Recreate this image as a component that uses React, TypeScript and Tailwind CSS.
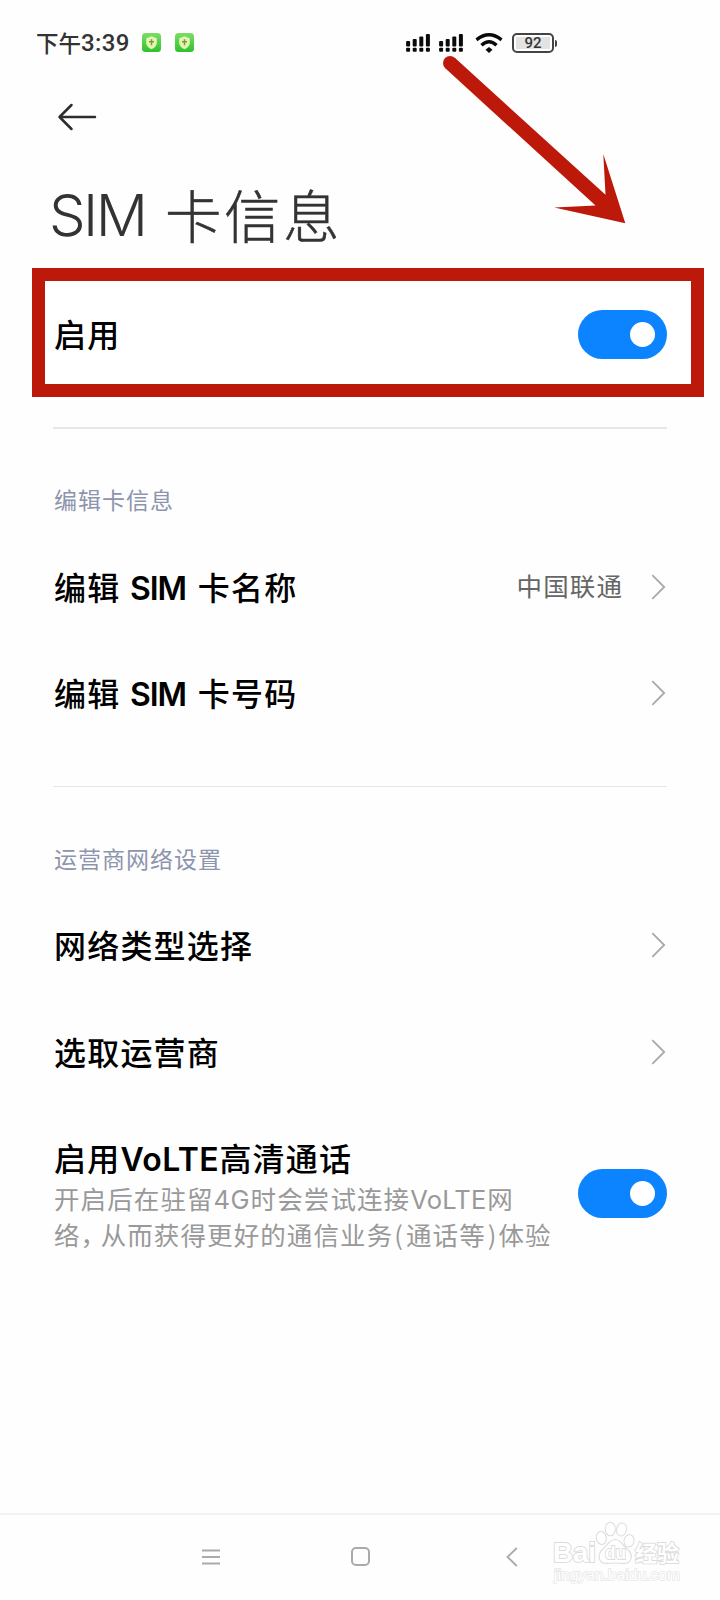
import type { ReactNode } from "react";

const CJK = "font-['Noto_Sans_CJK_SC',sans-serif]";

function ShieldBadge() {
  return (
    <svg className="h-[19px] w-[19px]" viewBox="0 0 19 19">
      <defs>
        <linearGradient id="badge" x1="0" y1="0" x2="0" y2="1">
          <stop offset="0" stopColor="#7ddc68" />
          <stop offset="1" stopColor="#2fc22c" />
        </linearGradient>
      </defs>
      <rect width="19" height="19" rx="3.5" fill="url(#badge)" />
      <path d="M9.5 3.2 L14.8 5.2 V9.4 C14.8 12.8 12.2 15 9.5 16.2 C6.8 15 4.2 12.8 4.2 9.4 V5.2 Z" fill="#e3f5b0" />
      <path d="M9.5 6.2 V12.2 M7 8.8 H12" stroke="#6fa03c" strokeWidth="1.5" />
    </svg>
  );
}

function Signal() {
  const tops = [8, 6, 3.5, 1];
  return (
    <svg className="h-5 w-6" viewBox="0 0 24 20">
      {tops.map((t, i) => (
        <g key={i} fill="#0a0a0a">
          <rect x={0.1 + i * 6.6} y={t} width="4" height={13.4 - t} rx="1" />
          <rect x={0.1 + i * 6.6} y="14.8" width="4" height="4" rx="1" />
        </g>
      ))}
    </svg>
  );
}

function Toggle() {
  return (
    <div className="flex h-[49px] w-[89px] shrink-0 items-center justify-end rounded-full bg-[#0d84ff] pr-3">
      <div className="h-[25px] w-[25px] rounded-full bg-white" />
    </div>
  );
}

function Chevron() {
  return (
    <svg className="mr-px h-[26px] w-[15px] shrink-0" viewBox="0 0 15 26" fill="none">
      <path d="M1.3 1.2 L13.2 13 L1.3 24.8" stroke="#a9a9a9" strokeWidth="1.8" />
    </svg>
  );
}

function Row({ children, value }: { children: ReactNode; value?: string }) {
  return (
    <div className="flex h-[106.5px] items-center">
      <div className="flex-1 pb-0.5 text-[32px] leading-[48px] font-medium tracking-[1.2px] whitespace-pre text-black">
        {children}
      </div>
      {value && <div className="mr-[28px] pb-[3px] text-[25.5px] leading-9 tracking-[1.1px] text-[#666]">{value}</div>}
      <Chevron />
    </div>
  );
}

function Sim() {
  return (
    <span className="inline-block w-[69px] pl-[9.5px] font-['Inter',sans-serif] leading-none font-semibold tracking-[-1px]">SIM</span>
  );
}

function SectionLabel({ children }: { children: string }) {
  return <div className="h-[34px] text-[23px] leading-[34px] tracking-[1px] text-[#8d94ad]">{children}</div>;
}

function Watermark() {
  return (
    <svg className="absolute top-[1518px] left-[545px] h-[72px] w-[145px]" viewBox="545 1518 145 72">
      <g fill="#fff" stroke="#dedede" strokeWidth="1.1">
        <ellipse cx="601.3" cy="1538" rx="5" ry="6.5" transform="rotate(-12 601.3 1538)" />
        <ellipse cx="610.3" cy="1529" rx="5" ry="6.8" />
        <ellipse cx="621.5" cy="1529.5" rx="5" ry="6.5" transform="rotate(14 621.5 1529.5)" />
        <ellipse cx="629" cy="1540.8" rx="5" ry="6.2" transform="rotate(10 629 1540.8)" />
        <path d="M615 1539.5 C620 1539.5 622 1544 626 1548 C631 1552 632.5 1556 630.5 1560 C628 1565 622 1563 615 1563 C608 1563 602 1565 599.8 1560 C598 1555 600 1551 604 1548 C608 1544 610 1539.5 615 1539.5 Z" />
      </g>
      <g fill="#fff" stroke="#dcdcdc" strokeWidth="1.8" paintOrder="stroke" fontWeight="700">
        <text x="553" y="1561.5" fontSize="27" fontFamily="Liberation Sans" textLength="43" lengthAdjust="spacingAndGlyphs">Bai</text>
        <text x="605" y="1559" fontSize="19" fontFamily="Liberation Sans" textLength="21" lengthAdjust="spacingAndGlyphs">du</text>
        <text x="635" y="1560.5" fontSize="22" fontFamily="Noto Sans CJK SC" textLength="44" lengthAdjust="spacingAndGlyphs">经验</text>
      </g>
      <text x="554" y="1580" fontSize="14" fontFamily="Liberation Sans" fill="#fff" stroke="#e6e6e6" strokeWidth="1.3" paintOrder="stroke" textLength="126" lengthAdjust="spacingAndGlyphs">jingyan.baidu.com</text>
    </svg>
  );
}

export default function App() {
  return (
    <div className={`relative flex h-[1600px] w-[720px] flex-col overflow-hidden bg-[#fefefe] ${CJK}`}>
      <header className="flex h-[86px] items-center pl-[36px]">
        <div className="flex w-[106px] items-center text-[#333]">
          <span className="pb-[3px] text-[22.5px] leading-8 font-medium">下午</span>
          <span className="font-['Roboto',sans-serif] text-[24px] leading-8 font-medium tracking-[0.4px]">3:39</span>
        </div>
        <div className="flex gap-[14px] pb-px">
          <ShieldBadge />
          <ShieldBadge />
        </div>
        <div className="ml-[212px] flex items-center">
          <Signal />
          <div className="w-[9px]" />
          <Signal />
          <svg className="ml-3 h-[21px] w-7" viewBox="0 0 28 21" fill="none" stroke="#0a0a0a">
            <path d="M1.5 6.8 Q14 -3.2 26.5 6.8" strokeWidth="3.4" />
            <path d="M6.5 12.2 Q14 5.2 21.5 12.2" strokeWidth="3.4" />
            <path d="M14 14 L17.5 16.8 L14 20 L10.5 16.8 Z" fill="#0a0a0a" stroke="none" />
          </svg>
          <div className="ml-[9px] flex h-5 w-[42px] items-center justify-center rounded-[5px] border-2 border-[#444] p-0.5">
            <span className="flex h-full w-full items-center justify-center bg-[#e3e3e3] font-['Roboto',sans-serif] text-[15px] font-medium text-[#333]">92</span>
          </div>
          <div className="ml-px h-[7px] w-0.5 rounded-r-sm bg-[#444]" />
        </div>
      </header>

      <div className="flex h-[62px] items-center pl-[57px]">
        <svg className="h-7 w-10" viewBox="0 0 40 28" fill="none" stroke="#2d2d2d" strokeWidth="2.5" strokeLinecap="round" strokeLinejoin="round">
          <path d="M38 14 H2.5 M14.5 2 L2.5 14 L14.5 26" />
        </svg>
      </div>

      <h1 className="flex h-[120px] items-center pt-2.5 pl-[49px] font-light text-[#333]">
        <span className="w-[116px] pt-[3px] font-['Inter',sans-serif] text-[58px] leading-[80px] tracking-[-2.6px]">SIM</span>
        <span className="text-[56.5px] leading-[80px] tracking-[2.5px] [-webkit-text-stroke:0.5px_#333]">卡信息</span>
      </h1>

      <div className="mr-4 ml-8 flex h-[129px] shrink-0 items-center border-[13px] border-[#bd190b] bg-white pr-[24px] pl-[9px]">
        <div className="flex-1 text-[32px] leading-[48px] font-medium tracking-[1.2px] text-black">启用</div>
        <div className="pt-[3px]">
          <Toggle />
        </div>
      </div>

      <main className="flex flex-col pr-[53px] pl-[54px]">
        <div className="mt-[30px] -ml-px h-[1.5px] bg-[#e6e6e6]" />
        <div className="h-[53px]" />
        <SectionLabel>编辑卡信息</SectionLabel>
        <div className="h-[18px]" />
        <Row value="中国联通">编辑<Sim /> 卡名称</Row>
        <Row>编辑<Sim /> 卡号码</Row>
        <div className="mt-[39px] -ml-px h-[1.5px] bg-[#e6e6e6]" />
        <div className="h-[54px]" />
        <SectionLabel>运营商网络设置</SectionLabel>
        <div className="h-[17px]" />
        <Row>网络类型选择</Row>
        <Row>选取运营商</Row>
        <div className="flex h-[178px] items-start">
          <div className="flex-1 whitespace-nowrap">
            <div className="mt-[28px] h-[47px] text-[32px] leading-[48px] font-medium tracking-[1.2px] text-black">
              启用<span className="inline-block w-[99px] font-['Inter',sans-serif] leading-none font-semibold tracking-[0.4px]">VoLTE</span>高清通话
            </div>
            <div className="text-[25.5px] leading-[35.5px] tracking-[1.1px] text-[#999]">
              <p className="h-[35.5px]">
                开启后在驻留<span className="inline-block w-[37px] font-['Inter',sans-serif] leading-none tracking-[0.5px]">4G</span>时会尝试连接<span className="inline-block w-[77px] font-['Inter',sans-serif] leading-none tracking-[0.2px]">VoLTE</span>网
              </p>
              <p className="h-[35.5px]">
                络<span className="tracking-[-5.5px]">，</span>从而获得更好的通信业务<span className="pr-0.5 pl-px">(</span>通话等<span className="pr-px pl-0.5">)</span>体验
              </p>
            </div>
          </div>
          <div className="pt-[64px]">
            <Toggle />
          </div>
        </div>
      </main>

      <nav className="mt-auto flex h-[87px] items-center border-t-2 border-[#f3f3f3] pb-0.5 pl-[202px]">
        <svg className="h-5 w-[18px]" viewBox="0 0 18 20" stroke="#aaa" strokeWidth="1.8">
          <path d="M0 3.5 H18 M0 10 H18 M0 16.5 H18" />
        </svg>
        <div className="ml-[131px] h-[19px] w-[19px] rounded-[5px] border-2 border-[#aaa]" />
        <svg className="ml-[136px] h-5 w-3" viewBox="0 0 12 20" fill="none" stroke="#aaa" strokeWidth="1.8">
          <path d="M10.8 1 L1.5 10 L10.8 19" />
        </svg>
      </nav>

      <svg className="absolute top-[50px] left-[435px] h-[180px] w-[200px]" viewBox="435 50 200 180" fill="#bd190b">
        <circle cx="450" cy="63" r="7" />
        <path d="M454.8 57.8 L605.5 194.8 L603.3 154 L625.3 223.3 L554.3 207.4 L595.5 205.6 L445.3 68.2 Z" />
      </svg>

      <Watermark />
    </div>
  );
}
